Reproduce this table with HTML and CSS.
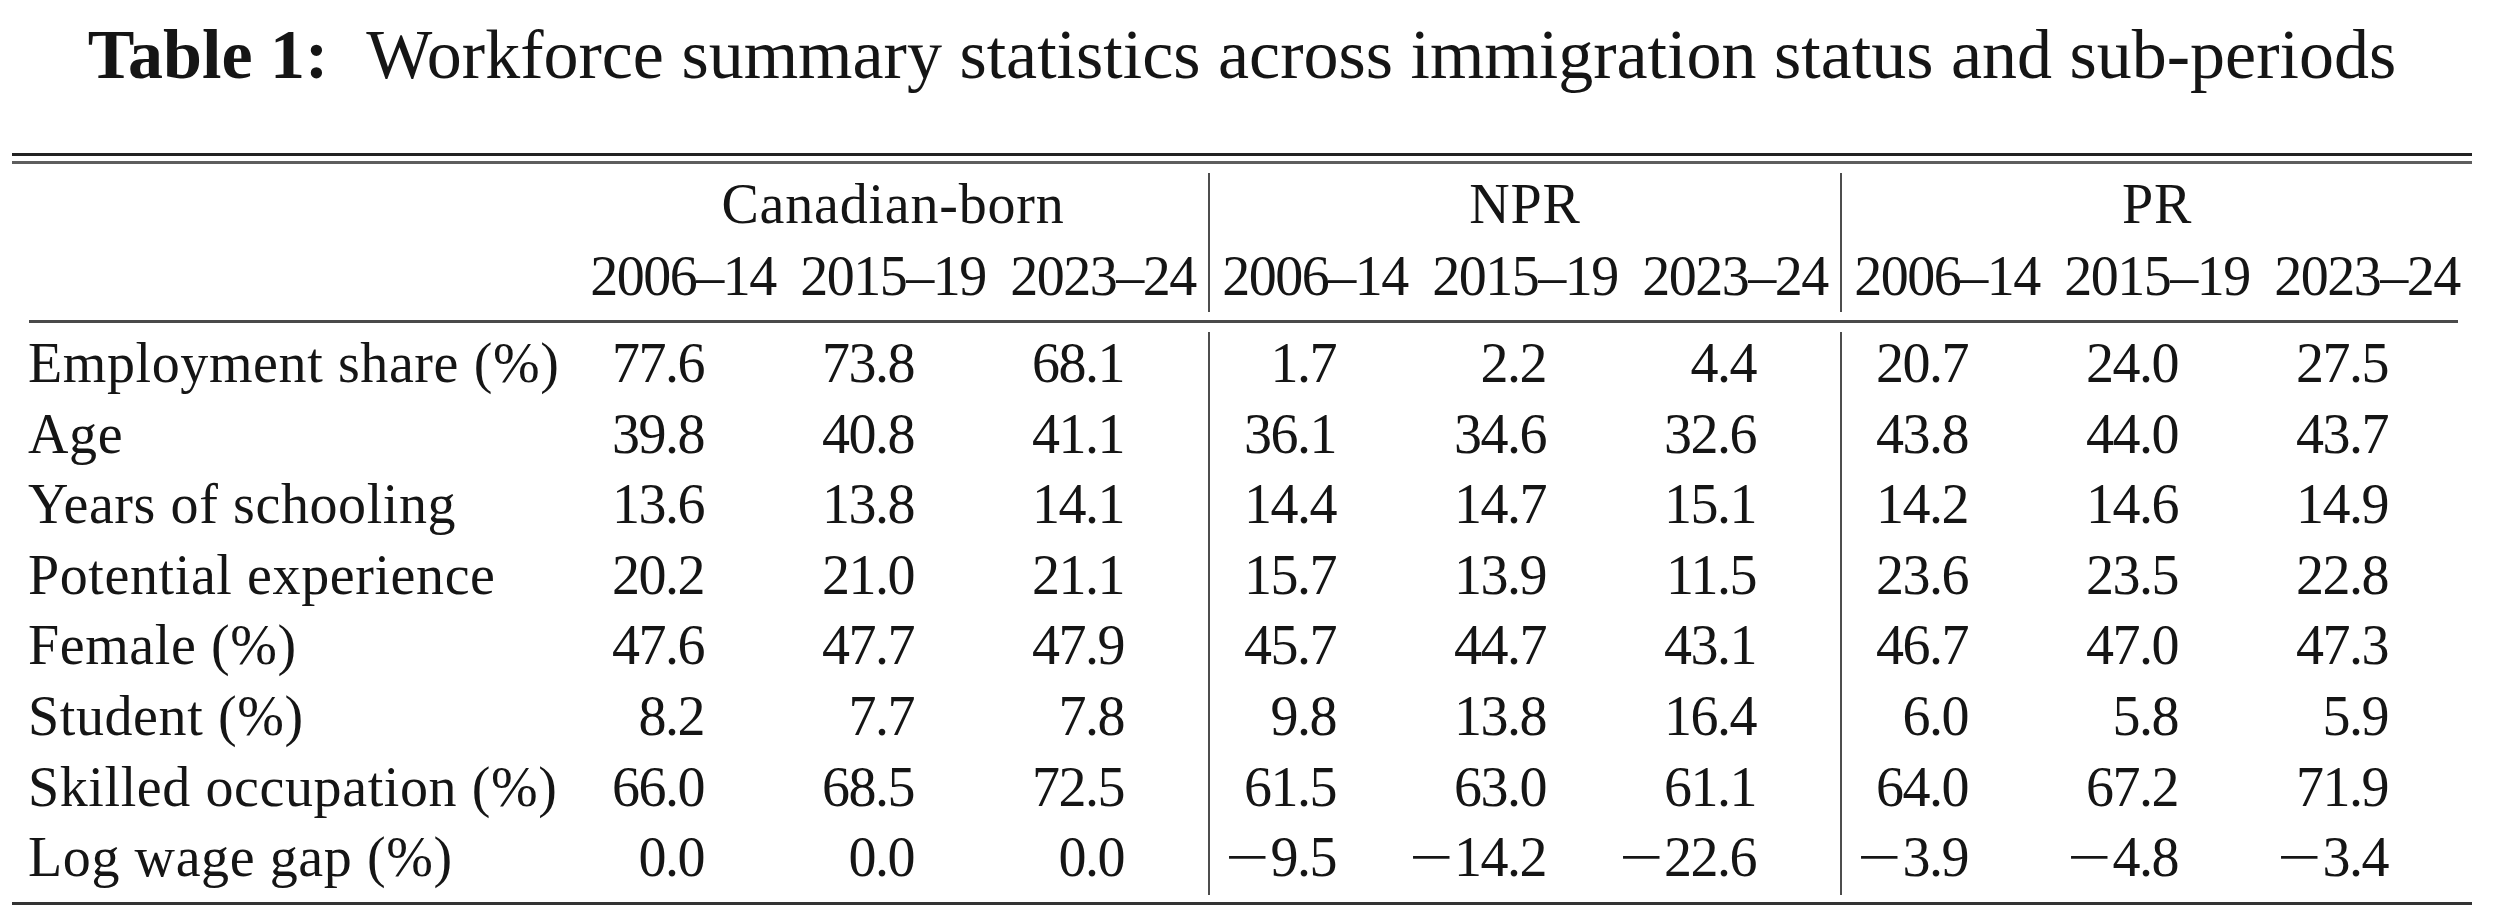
FILE: index.html
```html
<!DOCTYPE html>
<html lang="en">
<head>
<meta charset="utf-8">
<title>Table 1: Workforce summary statistics</title>
<link rel="stylesheet" href="styles.css">
</head>
<body>
<div class="page">
  <div class="caption"><span class="cap-label">Table 1:</span><span class="cap-text">Workforce summary statistics across immigration status and sub-periods</span></div>

  <div class="toprule"></div>

  <div class="grid head">
    <div class="vl vl1"></div>
    <div class="vl vl2"></div>
    <div class="cell label r1"></div>
    <div class="cell grp g1">Canadian-born</div>
    <div class="cell grp g2">NPR</div>
    <div class="cell grp g3">PR</div>
    <div class="cell label r2"></div>
    <div class="cell yr">2006–14</div>
    <div class="cell yr">2015–19</div>
    <div class="cell yr">2023–24</div>
    <div class="cell yr">2006–14</div>
    <div class="cell yr">2015–19</div>
    <div class="cell yr">2023–24</div>
    <div class="cell yr">2006–14</div>
    <div class="cell yr">2015–19</div>
    <div class="cell yr">2023–24</div>
  </div>

  <div class="midrule"></div>

  <div class="grid body">
    <div class="vl vl1"></div>
    <div class="vl vl2"></div>

    <div class="cell label">Employment share (%)</div>
    <div class="cell num">77.6</div><div class="cell num">73.8</div><div class="cell num">68.1</div>
    <div class="cell num">1.7</div><div class="cell num">2.2</div><div class="cell num">4.4</div>
    <div class="cell num">20.7</div><div class="cell num">24.0</div><div class="cell num">27.5</div>

    <div class="cell label">Age</div>
    <div class="cell num">39.8</div><div class="cell num">40.8</div><div class="cell num">41.1</div>
    <div class="cell num">36.1</div><div class="cell num">34.6</div><div class="cell num">32.6</div>
    <div class="cell num">43.8</div><div class="cell num">44.0</div><div class="cell num">43.7</div>

    <div class="cell label">Years of schooling</div>
    <div class="cell num">13.6</div><div class="cell num">13.8</div><div class="cell num">14.1</div>
    <div class="cell num">14.4</div><div class="cell num">14.7</div><div class="cell num">15.1</div>
    <div class="cell num">14.2</div><div class="cell num">14.6</div><div class="cell num">14.9</div>

    <div class="cell label">Potential experience</div>
    <div class="cell num">20.2</div><div class="cell num">21.0</div><div class="cell num">21.1</div>
    <div class="cell num">15.7</div><div class="cell num">13.9</div><div class="cell num">11.5</div>
    <div class="cell num">23.6</div><div class="cell num">23.5</div><div class="cell num">22.8</div>

    <div class="cell label">Female (%)</div>
    <div class="cell num">47.6</div><div class="cell num">47.7</div><div class="cell num">47.9</div>
    <div class="cell num">45.7</div><div class="cell num">44.7</div><div class="cell num">43.1</div>
    <div class="cell num">46.7</div><div class="cell num">47.0</div><div class="cell num">47.3</div>

    <div class="cell label">Student (%)</div>
    <div class="cell num">8.2</div><div class="cell num">7.7</div><div class="cell num">7.8</div>
    <div class="cell num">9.8</div><div class="cell num">13.8</div><div class="cell num">16.4</div>
    <div class="cell num">6.0</div><div class="cell num">5.8</div><div class="cell num">5.9</div>

    <div class="cell label">Skilled occupation (%)</div>
    <div class="cell num">66.0</div><div class="cell num">68.5</div><div class="cell num">72.5</div>
    <div class="cell num">61.5</div><div class="cell num">63.0</div><div class="cell num">61.1</div>
    <div class="cell num">64.0</div><div class="cell num">67.2</div><div class="cell num">71.9</div>

    <div class="cell label">Log wage gap (%)</div>
    <div class="cell num">0.0</div><div class="cell num">0.0</div><div class="cell num">0.0</div>
    <div class="cell num"><span class="minus">−</span>9.5</div><div class="cell num"><span class="minus">−</span>14.2</div><div class="cell num"><span class="minus">−</span>22.6</div>
    <div class="cell num"><span class="minus">−</span>3.9</div><div class="cell num"><span class="minus">−</span>4.8</div><div class="cell num"><span class="minus">−</span>3.4</div>
  </div>

  <div class="bottomrule"></div>
</div>
</body>
</html>
```

FILE: styles.css
```css
html, body {
  margin: 0;
  padding: 0;
  background: #ffffff;
}

body {
  width: 2500px;
  height: 924px;
  overflow: hidden;
  font-family: "Liberation Serif", "Times New Roman", serif;
  color: #151515;
}

.page {
  margin-left: 12px;
  width: 2460px;
}

/* caption */
.caption {
  padding-top: 15px;
  height: 80px;
  line-height: 80px;
  font-size: 70px;
  text-align: center;
  white-space: nowrap;
}

.cap-label {
  font-weight: bold;
  margin-right: 38px;
}

/* rules */
.toprule {
  margin-top: 58px;
  height: 5px;
  border-top: 3px solid #222222;
  border-bottom: 3px solid #5e5e5e;
}

.midrule {
  height: 0;
  margin: 0 14px 0 17px;
  border-top: 3px solid #4a4a4a;
}

.bottomrule {
  height: 0;
  border-top: 3px solid #333333;
}

/* grids */
.grid {
  display: grid;
  grid-template-columns: 566px repeat(3, 210px) 2px repeat(3, 210px) 2px repeat(3, 210px);
  font-size: 56px;
}

.head {
  grid-template-rows: 72px 72px;
  line-height: 72px;
  padding-top: 4px;
  padding-bottom: 8px;
}

.body {
  grid-template-rows: repeat(8, 70.6px) 9px;
  line-height: 70.6px;
  padding-top: 5px;
}

.cell {
  white-space: nowrap;
}

.label {
  padding-left: 16px;
  letter-spacing: 0.6px;
}

.head .r1 { grid-row: 1; grid-column: 1; }
.head .r2 { grid-row: 2; grid-column: 1; }

.grp {
  grid-row: 1;
  text-align: center;
  letter-spacing: 0.8px;
}

.g1 { grid-column: 2 / span 3; }
.g2 { grid-column: 6 / span 3; }
.g3 { grid-column: 10 / span 3; }

.yr {
  grid-row: 2;
  text-align: center;
  letter-spacing: -1.5px;
}

.num {
  text-align: right;
  padding-right: 84px;
  letter-spacing: -1.5px;
}

.minus {
  display: inline-block;
  margin-right: 3px;
  transform: scaleX(1.4);
  transform-origin: right center;
}

/* vertical separators */
.vl {
  grid-row: 1 / -1;
  width: 2px;
  background: #4d4d4d;
}

.head .vl { margin-top: 5px; }
.body .vl { margin-top: 4px; margin-bottom: 7px; }

.vl1 { grid-column: 5; }
.vl2 { grid-column: 9; }
```
